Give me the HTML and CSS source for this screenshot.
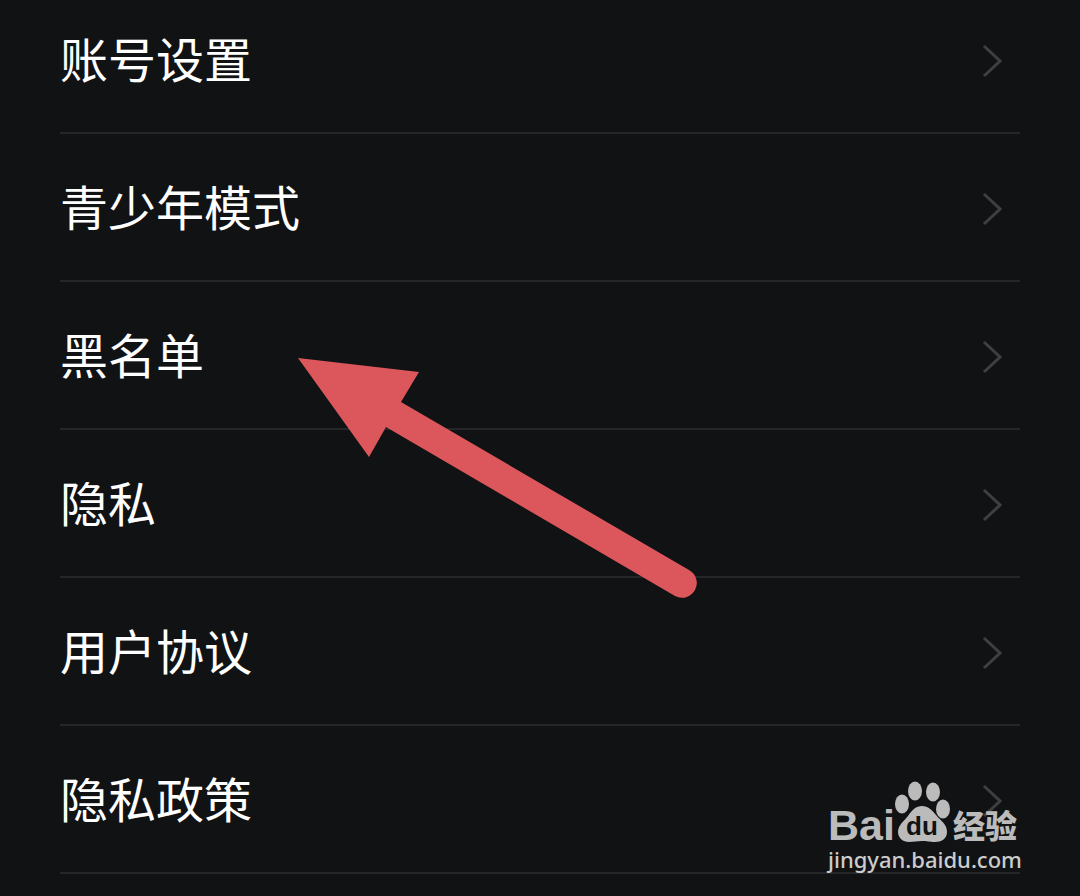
FILE: index.html
```html
<!DOCTYPE html>
<html lang="zh-CN">
<head>
    <meta charset="UTF-8" />
    <meta name="viewport" content="width=device-width, initial-scale=1.0" />
    <title>设置</title>
    <link rel="stylesheet" href="styles.css">
</head>
<body>
    <main class="settings">
        <nav class="menu">
            <a class="menu-item" href="#account">
                <span>账号设置</span>
                <svg class="chevron" viewBox="0 0 20 34"><path d="M2 2 L18 17 L2 32" /></svg>
            </a>
            <a class="menu-item" href="#teen">
                <span>青少年模式</span>
                <svg class="chevron" viewBox="0 0 20 34"><path d="M2 2 L18 17 L2 32" /></svg>
            </a>
            <a class="menu-item" href="#blacklist">
                <span>黑名单</span>
                <svg class="chevron" viewBox="0 0 20 34"><path d="M2 2 L18 17 L2 32" /></svg>
            </a>
            <a class="menu-item" href="#privacy">
                <span>隐私</span>
                <svg class="chevron" viewBox="0 0 20 34"><path d="M2 2 L18 17 L2 32" /></svg>
            </a>
            <a class="menu-item" href="#agreement">
                <span>用户协议</span>
                <svg class="chevron" viewBox="0 0 20 34"><path d="M2 2 L18 17 L2 32" /></svg>
            </a>
            <a class="menu-item" href="#policy">
                <span>隐私政策</span>
                <svg class="chevron" viewBox="0 0 20 34"><path d="M2 2 L18 17 L2 32" /></svg>
            </a>
        </nav>

        <!-- 指向黑名单的箭头 -->
        <svg class="pointer" viewBox="0 0 400 242">
            <path d="M0 0 L121 14 L103 44 L391 212 A14 14 0 0 1 377 238 L88 69 L71 99 Z" />
        </svg>

        <!-- 水印 -->
        <div class="watermark">
            <svg class="logo" viewBox="0 0 194 68" role="img" aria-label="Baidu 经验">
                <text class="logo-bai" x="0" y="60">Bai</text>
                <ellipse cx="74" cy="24" rx="7" ry="9.5" />
                <ellipse cx="87" cy="11" rx="7" ry="9.5" />
                <ellipse cx="105" cy="12" rx="7" ry="9.5" />
                <ellipse cx="115" cy="29" rx="7" ry="9.5" />
                <path d="M94 26 C100 26 104 30 108 35 C113 41 119 44 119 52 C119 59 113 62 107 62 C101 62 99 61 94 61 C89 61 86 62 81 62 C75 62 70 58 70 52 C70 45 76 41 80 36 C84 30 88 26 94 26 Z" />
                <text class="logo-du" x="94" y="55">du</text>
                <text class="logo-exp" x="125" y="58">经验</text>
            </svg>
            <span class="site">jingyan.baidu.com</span>
        </div>
    </main>
</body>
</html>
```

FILE: styles.css
```css
body {
    margin: 0;
    background-color: #111214;
    font-family: "Noto Sans CJK SC", sans-serif;
}

.settings {
    position: relative;
    min-height: 100vh;
    box-sizing: border-box;
    padding: 0 60px;
    display: flow-root;
}

.menu {
    display: flex;
    flex-direction: column;
    margin-top: -14px;
}

.menu-item {
    display: flex;
    align-items: center;
    justify-content: space-between;
    height: 148px;
    box-sizing: border-box;
    padding: 4px 18px 0 0;
    border-bottom: 2px solid #252628;
    color: #fff;
    font-size: 48px;
    line-height: 72px;
    text-decoration: none;
}

.menu-item span {
    padding-bottom: 8px;
}

.chevron {
    width: 20px;
    height: 34px;
    fill: none;
    stroke: #3e3f41;
    stroke-width: 3;
}

.pointer {
    position: absolute;
    top: 358px;
    left: 298px;
    width: 400px;
    height: 242px;
    fill: #dc575c;
}

.watermark {
    position: absolute;
    right: 58px;
    bottom: 26px;
    width: 194px;
    display: flex;
    flex-direction: column;
    color: #ccc;
}

.logo {
    width: 194px;
    height: 68px;
    fill: #bbb;
    overflow: visible;
}

.logo-bai {
    font-family: "Liberation Sans", Arial, sans-serif;
    font-size: 43px;
    font-weight: 700;
}

.logo-du {
    fill: #111214;
    font-family: "Liberation Sans", Arial, sans-serif;
    font-size: 26px;
    font-weight: 700;
    text-anchor: middle;
}

.logo-exp {
    font-size: 32px;
    font-weight: 900;
}

.site {
    font-family: "Noto Sans", sans-serif;
    font-size: 22px;
    font-weight: 500;
    line-height: 22px;
    white-space: nowrap;
}
```
